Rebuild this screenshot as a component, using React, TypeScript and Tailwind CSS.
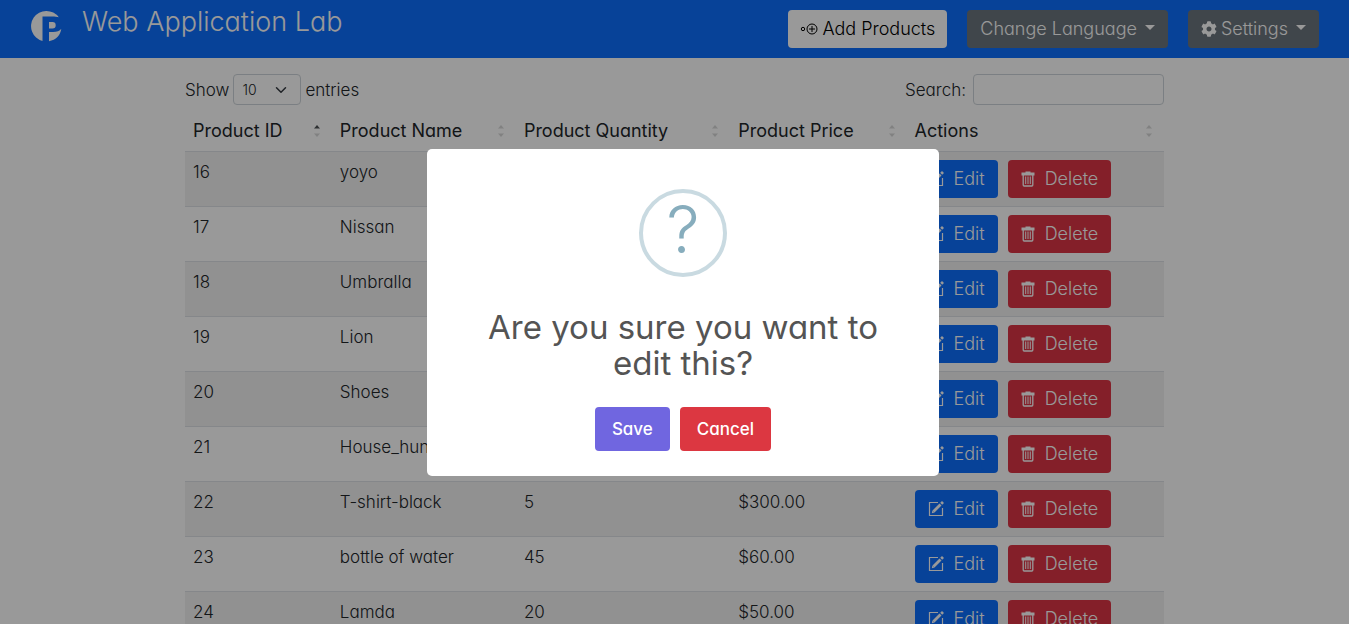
import React from "react";
import { FaCog } from "react-icons/fa";

type Product = { id: number; name: string; quantity?: number; price?: string };

const products: Product[] = [
  { id: 16, name: "yoyo" },
  { id: 17, name: "Nissan" },
  { id: 18, name: "Umbralla" },
  { id: 19, name: "Lion" },
  { id: 20, name: "Shoes" },
  { id: 21, name: "House_hun" },
  { id: 22, name: "T-shirt-black", quantity: 5, price: "$300.00" },
  { id: 23, name: "bottle of water", quantity: 45, price: "$60.00" },
  { id: 24, name: "Lamda", quantity: 20, price: "$50.00" },
];

const columns = [
  { label: "Product ID", width: "w-[15%]", sorted: true },
  { label: "Product Name", width: "w-[18.8%]", sorted: false },
  { label: "Product Quantity", width: "w-[21.9%]", sorted: false },
  { label: "Product Price", width: "w-[18%]", sorted: false },
  { label: "Actions", width: "w-[26.3%]", sorted: false },
];

function Logo() {
  return (
    <svg viewBox="0 0 32 32" className="size-8" aria-hidden="true">
      <path
        fill="white"
        d="M12.500 31A15.300 15.300 0 1 1 28.800 7.300C27 6.600 25 6.500 22 6.500H12.500Z M19 12h3.500a3.200 3.200 0 0 1 0 6.400H19Z M19 22h4c4 0 6.500-1 8.300-3.200C30.500 25 26 30.200 19 31.200Z"
      />
    </svg>
  );
}

function Caret() {
  return (
    <svg viewBox="0 0 10 5" className="mb-1 h-[5px] w-[10px] fill-current" aria-hidden="true">
      <path d="M0 0h10L5 5z" />
    </svg>
  );
}

function EditIcon() {
  return (
    <svg viewBox="0 0 16 16" className="size-4" fill="none" stroke="currentColor" aria-hidden="true">
      <path d="M10 1.500H1.500v13h13V7" strokeWidth="1.200" />
      <path d="M5.500 10.500 12.500 3.500" strokeWidth="2.800" />
      <path d="M13.200 2.800 15 1" strokeWidth="2.800" />
      <path d="M3.800 12.200 4.400 9.400 6.600 11.600z" fill="currentColor" stroke="none" />
    </svg>
  );
}

function TrashIcon() {
  return (
    <svg viewBox="0 0 14 16" className="h-4 w-[14px]" aria-hidden="true">
      <path d="M4.500 0.500h5v1H13.500v3H0.500v-3h4z" fill="currentColor" />
      <path d="M2.200 4v10a1 1 0 0 0 1 1h7.600a1 1 0 0 0 1-1V4" fill="none" stroke="currentColor" strokeWidth="1.300" />
      <path d="M4.700 5.500v7.500M7 5.500v7.500M9.300 5.500v7.500" fill="none" stroke="currentColor" strokeWidth="1" />
    </svg>
  );
}

function SortArrows({ sorted }: { sorted: boolean }) {
  return (
    <svg viewBox="0 0 6 12" className="h-3 w-[6px] shrink-0" aria-hidden="true">
      <path d="M0 3.500 3 0l3 3.500z" fill="#212529" opacity={sorted ? 0.8 : 0.18} />
      <path d="M0 8.500h6L3 12z" fill="#212529" opacity={0.18} />
    </svg>
  );
}

function Header() {
  return (
    <header className="flex h-[58px] items-center justify-between bg-[#0d6efd] px-[30px] text-white">
      <a href="#" className="flex items-start gap-5 pb-[6px]">
        <Logo />
        <span className="text-[27px] leading-6">Web Application Lab</span>
      </a>
      <nav className="flex gap-5 text-lg leading-6">
        <button className="flex h-[38px] items-center gap-1 rounded bg-white px-3 text-black">
          <svg viewBox="0 0 18 12" className="h-3 w-[18px] fill-none stroke-current" aria-hidden="true">
            <circle cx="3" cy="6" r="1.700" />
            <circle cx="12" cy="6" r="5" />
            <path d="M9 6h6M12 3v6" />
          </svg>
          Add Products
        </button>
        <button className="flex h-[38px] items-center gap-2 rounded bg-[#6c757d] px-[13px]">
          Change Language <Caret />
        </button>
        <button className="flex h-[38px] items-center gap-2 rounded bg-[#6c757d] px-[13px]">
          <span className="flex items-center gap-1">
            <FaCog className="size-4" /> Settings
          </span>
          <Caret />
        </button>
      </nav>
    </header>
  );
}

function ProductTable() {
  return (
    <table className="w-full table-fixed border-collapse text-left">
      <thead>
        <tr className="border-b border-[#dee2e6]">
          {columns.map((c) => (
            <th key={c.label} className={`${c.width} py-2 pr-3 pl-2 text-lg leading-6 font-normal`}>
              <div className="flex items-center justify-between">
                {c.label}
                <SortArrows sorted={c.sorted} />
              </div>
            </th>
          ))}
        </tr>
      </thead>
      <tbody>
        {products.map((p) => (
          <tr key={p.id} className="border-b border-[#dee2e6] align-top odd:bg-[#f2f2f2]">
            <td className="p-2">{p.id}</td>
            <td className="p-2">{p.name}</td>
            <td className="p-2">{p.quantity}</td>
            <td className="p-2">{p.price}</td>
            <td className="p-2">
              <div className="flex gap-[10px] text-lg leading-6 text-white">
                <button className="flex h-[38px] items-center gap-[10px] rounded bg-[#0d6efd] px-[13px]">
                  <EditIcon />
                  Edit
                </button>
                <button className="flex h-[38px] items-center gap-[10px] rounded bg-[#dc3545] px-[13px]">
                  <TrashIcon />
                  Delete
                </button>
              </div>
            </td>
          </tr>
        ))}
      </tbody>
    </table>
  );
}

function ConfirmDialog() {
  return (
    <div className="fixed inset-0 flex items-center justify-center bg-black/40 pl-[17px]">
      <div
        role="dialog"
        aria-modal="true"
        aria-labelledby="confirm-title"
        className="flex w-full max-w-[512px] flex-col items-center rounded-[5px] bg-white px-5 pt-10 pb-[25px]"
      >
        <div className="flex size-[88px] items-center justify-center rounded-full border-4 border-[#c9dae1] pb-2 text-[66px] leading-none font-light text-[#87adbd]">
          ?
        </div>
        <h2 id="confirm-title" className="mt-8 max-w-[432px] text-center text-[33px] leading-9 font-normal text-[#545454]">
          Are you sure you want to edit this?
        </h2>
        <div className="mt-[26px] flex gap-[10px] text-[17px] font-medium text-white">
          <button className="h-11 rounded bg-[#7066e0] px-[17px]">Save</button>
          <button className="h-11 rounded bg-[#dc3741] px-[17px]">Cancel</button>
        </div>
      </div>
    </div>
  );
}

export default function App() {
  return (
    <div className="h-screen overflow-hidden bg-white font-['Inter',sans-serif] text-[17px] leading-6 font-light text-[#212529] [font-feature-settings:'cv11']">
      <Header />
      <main className="mx-auto mt-4 w-full max-w-[979px]">
        <div className="flex items-center justify-between">
          <label className="flex items-center gap-1">
            Show
            <span className="grid items-center">
              <select className="col-start-1 row-start-1 h-[31px] w-[68px] appearance-none rounded border border-[#ced4da] bg-white px-2 text-sm">
                <option>10</option>
                <option>25</option>
                <option>50</option>
              </select>
              <svg viewBox="0 0 16 16" className="pointer-events-none col-start-1 row-start-1 mr-[14px] size-3 justify-self-end fill-none stroke-[#343a40] stroke-2" aria-hidden="true">
                <path strokeLinecap="round" strokeLinejoin="round" d="m2 5 6 6 6-6" />
              </svg>
            </span>
            entries
          </label>
          <label className="flex items-center gap-[7px]">
            Search:
            <input type="search" className="h-[31px] w-[191px] rounded border border-[#ced4da] bg-white px-2 text-sm" />
          </label>
        </div>
        <div className="mt-[6px]">
          <ProductTable />
        </div>
      </main>
      <ConfirmDialog />
    </div>
  );
}
